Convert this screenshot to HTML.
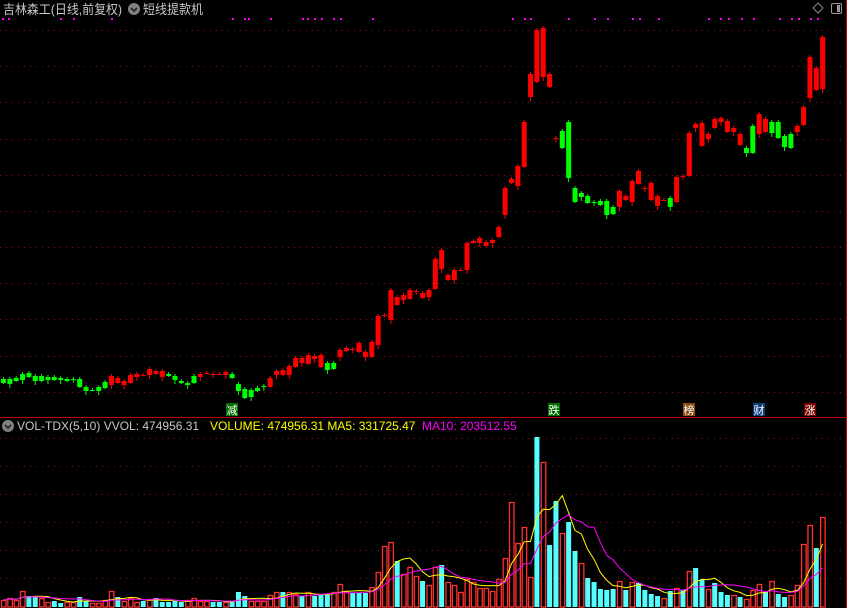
<!DOCTYPE html>
<html><head><meta charset="utf-8"><style>
html,body{margin:0;padding:0;background:#000;width:847px;height:608px;overflow:hidden}
svg{display:block}
text{font-family:"Liberation Sans","Noto Sans CJK SC",sans-serif}
</style></head><body>
<svg id="s" width="847" height="608" xmlns="http://www.w3.org/2000/svg">
<rect width="847" height="608" fill="#000"/>
<g id="grid"></g>
<line x1="846.5" y1="0" x2="846.5" y2="608" stroke="#c00000"/>
<line x1="0" y1="417.5" x2="846" y2="417.5" stroke="#c00000"/>
<text x="3" y="14" font-size="13" fill="#c8c8c8" textLength="119" lengthAdjust="spacingAndGlyphs">吉林森工(日线,前复权)</text>
<circle cx="134" cy="9" r="6" fill="#808080"/>
<path d="M131 8 L134 11 L137 8" stroke="#222" stroke-width="1.6" fill="none"/>
<text x="143" y="14" font-size="13" fill="#c8c8c8" textLength="60" lengthAdjust="spacingAndGlyphs">短线提款机</text>
<path d="M818 3 L823 8 L818 13 L813 8 Z" stroke="#888" fill="none"/>
<rect x="831.5" y="3.5" width="10" height="10" rx="1.5" stroke="#999" fill="none"/>
<rect x="837" y="5" width="3" height="7" fill="#999"/>
<g id="dots" fill="#ff00ff"></g>
<g id="candles"></g>
<g id="vol"></g>
<g font-size="11">
<rect x="226" y="403" width="12" height="13" fill="#006e00"/><text x="226.5" y="414" fill="#fff">减</text>
<rect x="548" y="403" width="12" height="13" fill="#006e00"/><text x="548.5" y="414" fill="#fff">跌</text>
<rect x="683" y="403" width="12" height="13" fill="#8a4a10"/><text x="683.5" y="414" fill="#fff">榜</text>
<rect x="753" y="403" width="12" height="13" fill="#0a3c78"/><text x="753.5" y="414" fill="#fff">财</text>
<rect x="804" y="403" width="12" height="13" fill="#7a0000"/><text x="804.5" y="414" fill="#fff">涨</text>
</g>
<circle cx="8" cy="426" r="6" fill="#808080"/>
<path d="M5 425 L8 428 L11 425" stroke="#222" stroke-width="1.6" fill="none"/>
<text x="17" y="430" font-size="12" fill="#c8c8c8">VOL-TDX(5,10)  VVOL: 474956.31</text>
<text x="210" y="430" font-size="12" fill="#ffff00">VOLUME: 474956.31  MA5: 331725.47</text>
<text x="422" y="430" font-size="12" fill="#ff00ff">MA10: 203512.55</text>
</svg>
<script>
var NS="http://www.w3.org/2000/svg";
function el(p,t,a){var e=document.createElementNS(NS,t);for(var k in a)e.setAttribute(k,a[k]);document.getElementById(p).appendChild(e);return e;}
var gy=[30,66,102,139,175,211,247,283,319,356,392,438,466,494,522,550,578];
gy.forEach(function(y){el("grid","line",{x1:0,y1:y+.5,x2:845,y2:y+.5,stroke:"#8a1010","stroke-dasharray":"1 5"});});
[2,8,60,73,111,232,244,248,270,302,307,314,321,333,340,372,512,524,530,568,594,607,632,639,658,708,720,728,741,753,779,791,798,810,817].forEach(function(x){el("dots","rect",{x:x,y:18,width:2,height:2});});
var C=[["g",379,383],["g",379,384],["g",378,381],["g",374,380],["g",373,377],["g",376,381],["g",376,381],["g",377,380],["g",377,380],["g",378,380],["g",379,381],["g",379,379],["g",379,387],["g",387,391],["g",390,390],["g",387,391],["g",382,388],
["r",376,385],["r",378,383],["r",381,385],["r",375,383],["r",374,377],["r",375,375],["r",369,375],["r",371,374],["r",371,377],
["g",374,376],["g",376,380],["g",381,383],["g",383,385],["g",376,383],
["r",374,377],["r",373,373],["r",374,374],["r",374,374],["r",372,375],
["g",374,378],["g",384,391],["g",389,398],["g",390,397],["g",388,391],["g",386,387],
["r",378,387],["r",371,375],["r",370,375],["r",366,375],["r",358,367],["r",358,363],["r",355,364],["r",356,359],["r",355,367],["g",363,370],["g",363,369],
["r",350,357],["r",348,351],["r",349,349],["r",343,352],["r",352,357],["r",342,357],["r",316,345],["r",315,316],["r",290,320],["r",297,305],["r",295,300],["r",290,299],["r",291,291],["r",293,298],["r",290,297],["r",259,289],["r",250,269],["r",275,280],["r",270,280],["r",270,270],["r",243,270],["r",241,243],["r",238,243],["r",242,246],["r",240,243],["r",227,237],["r",188,215],["r",179,183],["r",166,186],["r",122,167],["r",74,97],["r",30,82],["r",28,77],["r",74,87],["r",138,138],
["g",131,148],["g",122,178],["g",188,202],["g",193,197],["g",196,203],["g",202,202],["g",201,205],["g",201,215],["g",207,214],
["r",191,207],["r",196,200],["r",181,202],["r",171,184],["r",188,188],["r",183,200],["r",196,206],["r",200,200],["g",198,207],["r",177,202],["r",176,176],["r",133,176],["r",124,128],["r",123,146],["r",134,139],["r",119,128],["r",118,122],["r",121,132],["r",128,132],["r",134,145],["g",148,153],["g",126,153],["r",114,134],["r",119,132],["g",122,133],["g",122,138],["g",136,147],["g",134,148],["r",126,132],["r",107,125],["r",57,98],["r",68,90],["r",37,89]];
C.forEach(function(c,i){var x=3.5+i*6.35,col=c[0]=="r"?"#ff0000":"#00ff00";var t=c[1],b=c[2];var w=((i*7)%7)+2;
el("candles","line",{x1:x,y1:t-w,x2:x,y2:b+((i*3)%6)+1,stroke:col,"stroke-width":1});
el("candles","rect",{x:x-2.5,y:t,width:5,height:Math.max(1,b-t),fill:col});});
var V=[["r",600],["r",598],["r",600],["r",591],["c",596],["c",596],["r",598],["r",602],["c",601],["c",603],["r",602],["r",602],["c",597],["c",601],["r",603],["r",603],["r",600],["r",591],["c",597],["r",601],["r",598],["r",602],["c",601],["r",599],["c",598],["c",602],["c",602],["c",601],["c",602],["r",600],["r",598],["r",601],["r",601],["c",602],["c",602],["r",602],["c",602],["c",592],["c",596],["r",601],["r",601],["r",601],["r",595],["r",592],["c",592],["r",592],["r",594],["c",596],["r",592],["c",596],["c",594],["c",595],["r",592],["r",584],["r",591],["c",593],["c",593],["c",593],["r",587],["r",572],["r",546],["r",542],["c",561],["r",574],["r",567],["r",576],["c",581],
["r",585],["r",567],["c",565],["r",582],["r",585],["r",592],["r",579],["r",582],["r",588],["r",588],["r",591],["r",579],["r",558],["r",502],["r",543],["r",527],["r",577],["c",437],["r",462],["c",545],["c",501],["r",533],["c",522],["c",551],["r",563],["c",578],["c",582],["c",589],["c",590],["c",589],["r",581],["c",590],["r",582],["c",583],["c",590],["c",594],["c",596],["r",598],["c",591],["r",588],["c",590],["r",571],["c",568],["c",580],["r",589],["c",583],["c",592],["c",595],["r",595],["c",597],["r",599],["r",590],["r",584],["c",592],["r",581],["c",594],["c",597],["r",595],["r",585],["r",544],["r",525],["c",548],["r",517]];
var B=607;var h=V.map(function(v){return B-v[1];});
V.forEach(function(v,i){var x=3.5+i*6.35;
if(v[0]=="c")el("vol","rect",{x:x-2.5,y:v[1],width:5,height:B-v[1],fill:"#55ffff"});
else el("vol","rect",{x:x-2,y:v[1]+.5,width:4.5,height:B-v[1]-.5,fill:"none",stroke:"#ff3030","stroke-width":1.3});});
function ma(n,col){var p="";for(var i=0;i<h.length;i++){var s=0,k=0;for(var j=Math.max(0,i-n+1);j<=i;j++){s+=h[j];k++;}var y=B-s/k;p+=(i?"L":"M")+(3.5+i*6.35).toFixed(1)+" "+y.toFixed(1);}
el("vol","path",{d:p,stroke:col,fill:"none","stroke-width":1});}
ma(5,"#ffff00");ma(10,"#ff00ff");
</script>
</body></html>
